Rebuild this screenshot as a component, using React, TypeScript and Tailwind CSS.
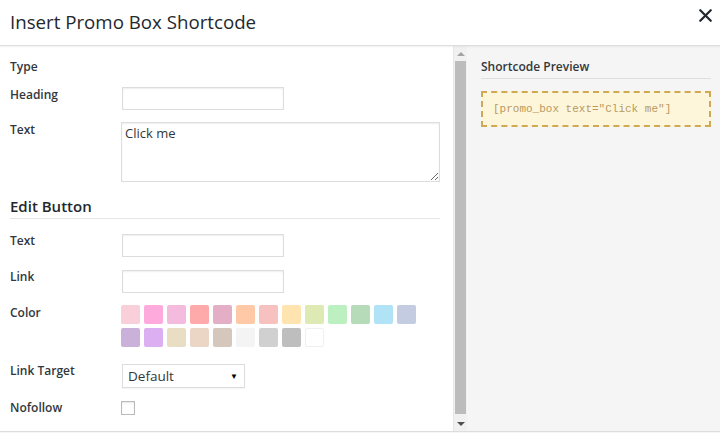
import { X } from "lucide-react";

const swatches = [
  "#f9d0d9", "#ffaadd", "#f5bbdf", "#ffaaaa", "#e3aec6", "#ffc9a8", "#f6c1bf",
  "#ffe4b0", "#ddeab3", "#bdf0c0", "#b6dbb9", "#b1e3f7", "#c3cce0",
  "#c9b1da", "#dcaef2", "#e9dec4", "#ebd6c6", "#d6c7bc", "#f4f4f4", "#d0d0d0",
  "#bebebe", "#ffffff",
];

const inputCls =
  "block w-[162px] h-[23px] border border-[#dddddd] bg-white shadow-[inset_0_1px_2px_rgba(0,0,0,0.07)] outline-none";

function Label({ children, className = "" }: { children: React.ReactNode; className?: string }) {
  return (
    <div className={`w-[122px] shrink-0 pl-[10px] text-[12px] leading-[18px] font-semibold text-[#32373c] ${className}`}>
      {children}
    </div>
  );
}

export default function App() {
  return (
    <div className="w-[720px] h-[433px] overflow-hidden flex flex-col bg-white font-['Open_Sans',sans-serif]">
      <header className="h-[46px] shrink-0 flex items-start justify-between pl-[10px] pr-[4px] border-b border-[#dddddd] shadow-[0_1px_2px_rgba(0,0,0,0.06)] relative z-10">
        <h1 className="mt-[10px] text-[18.7px] leading-[24px] font-normal text-[#23282d]">Insert Promo Box Shortcode</h1>
        <X className="mt-[5px] w-[21px] h-[21px] text-[#23282d]" strokeWidth={2.6} />
      </header>

      <div className="flex flex-1 min-h-0">
        <div className="w-[453px] shrink-0 bg-white pt-[12px] pr-[13px]">
          <Label>Type</Label>

          <div className="flex items-start mt-[11px]">
            <Label className="-mt-[1px]">Heading</Label>
            <input className={`${inputCls} h-[22px]`} />
          </div>

          <div className="flex items-start mt-[12px]">
            <Label className="-mt-[1px]">Text</Label>
            <textarea
              defaultValue="Click me"
              className="block w-[319px] h-[60px] -ml-[1px] border border-[#dddddd] bg-white px-[3px] py-0 text-[13px] leading-[20px] text-[#32373c] shadow-[inset_0_1px_2px_rgba(0,0,0,0.07)] outline-none resize-y"
            />
          </div>

          <h2 className="mt-[13px] ml-[10px] w-[430px] pb-[1px] border-b border-[#e5e5e5] text-[15px] leading-[22px] font-semibold text-[#23282d]">
            Edit Button
          </h2>

          <div className="flex items-start mt-[15px]">
            <Label className="-mt-[2px]">Text</Label>
            <input className={inputCls} />
          </div>

          <div className="flex items-start mt-[13px]">
            <Label className="-mt-[2px]">Link</Label>
            <input className={inputCls} />
          </div>

          <div className="flex items-start mt-[12px]">
            <Label className="-mt-[1px]">Color</Label>
            <div className="w-[300px] -ml-[1px] flex flex-wrap gap-[4px]">
              {swatches.map((c, i) => (
                <div
                  key={i}
                  className={`w-[19px] h-[19px] rounded-[2px] ${c === "#ffffff" ? "border border-[#f0f0f0]" : ""}`}
                  style={{ backgroundColor: c }}
                />
              ))}
            </div>
          </div>

          <div className="flex items-start mt-[17px]">
            <Label className="-mt-[2px]">Link Target</Label>
            <div className="w-[123px] h-[24px] border border-[#dddddd] bg-white shadow-[0_1px_1px_rgba(0,0,0,0.04)] flex items-center justify-between pl-[5px] pr-[6px] text-[13.5px] text-[#32373c]">
              <span>Default</span>
              <span className="text-[8px] text-black">▼</span>
            </div>
          </div>

          <div className="flex items-start mt-[13px]">
            <Label className="-mt-[2px]">Nofollow</Label>
            <div className="w-[14px] h-[14px] -ml-[1px] border border-[#bbbbbb] bg-white shadow-[inset_0_1px_2px_rgba(0,0,0,0.1)]" />
          </div>
        </div>

        <div className="w-[14px] shrink-0 bg-[#f1f1f1] border-l border-[#e6e6e6] flex flex-col items-center">
          <div className="h-[15px] flex items-center justify-center">
            <div className="w-0 h-0 border-l-[4px] border-r-[4px] border-b-[4px] border-l-transparent border-r-transparent border-b-[#a3a3a3]" />
          </div>
          <div className="w-[11px] flex-1 bg-[#bcbcbc] mb-[2px]" />
          <div className="h-[15px] flex items-center justify-center">
            <div className="w-0 h-0 border-l-[4px] border-r-[4px] border-t-[4px] border-l-transparent border-r-transparent border-t-[#505050]" />
          </div>
        </div>

        <div className="flex-1 bg-[#f5f5f5] pl-[14px] pr-[9px] pt-[12px]">
          <div className="pb-[2px] border-b border-[#dedede] text-[12px] leading-[18px] font-semibold text-[#32373c]">
            Shortcode Preview
          </div>
          <div className="mt-[12px] h-[36px] border-2 border-dashed border-[#cfa954] bg-[#fdf6db] flex items-center pl-[10px] font-['Liberation_Mono',monospace] text-[11px] text-[#b89a5f]">
            [promo_box text="Click me"]
          </div>
        </div>
      </div>

      <footer className="h-[2px] shrink-0 border-t border-[#dddddd] bg-[#f5f5f5]" />
    </div>
  );
}
